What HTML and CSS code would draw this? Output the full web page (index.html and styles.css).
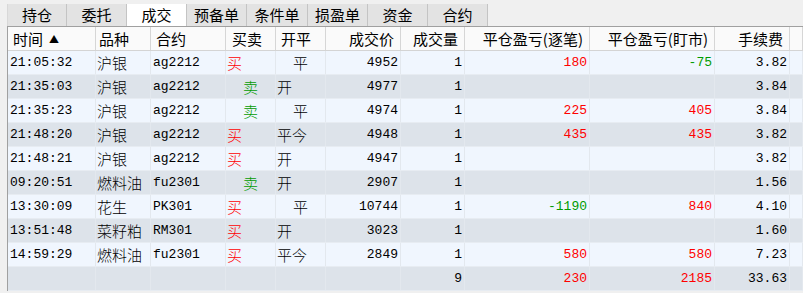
FILE: index.html
```html
<!DOCTYPE html>
<html lang="zh-CN">

<head>
    <meta charset="UTF-8">
    <meta name="viewport" content="width=device-width, initial-scale=1.0">
    <title>成交</title>
    <link rel="stylesheet" href="styles.css">
</head>

<body>

    <div class="tabs">
        <span class="tab">持仓</span>
        <span class="tab">委托</span>
        <span class="tab on">成交</span>
        <span class="tab">预备单</span>
        <span class="tab">条件单</span>
        <span class="tab">损盈单</span>
        <span class="tab">资金</span>
        <span class="tab">合约</span>
    </div>

    <div class="grid">
        <div class="row head">
            <span class="cell">时间<i class="sort">▲</i></span>
            <span class="cell">品种</span>
            <span class="cell">合约</span>
            <span class="cell">买卖</span>
            <span class="cell">开平</span>
            <span class="cell r">成交价</span>
            <span class="cell r">成交量</span>
            <span class="cell r">平仓盈亏(逐笔)</span>
            <span class="cell r">平仓盈亏(盯市)</span>
            <span class="cell r">手续费</span>
            <span class="cell"></span>
        </div>

        <div class="row">
            <span class="cell">21:05:32</span><span class="cell cn">沪银</span><span class="cell">ag2212</span>
            <span class="cell cn red">买</span><span class="cell cn ind">平</span>
            <span class="cell r">4952</span><span class="cell r">1</span>
            <span class="cell r red">180</span><span class="cell r green">-75</span><span class="cell r">3.82</span><span class="cell"></span>
        </div>
        <div class="row">
            <span class="cell">21:35:03</span><span class="cell cn">沪银</span><span class="cell">ag2212</span>
            <span class="cell cn ind green">卖</span><span class="cell cn">开</span>
            <span class="cell r">4977</span><span class="cell r">1</span>
            <span class="cell r"></span><span class="cell r"></span><span class="cell r">3.84</span><span class="cell"></span>
        </div>
        <div class="row">
            <span class="cell">21:35:23</span><span class="cell cn">沪银</span><span class="cell">ag2212</span>
            <span class="cell cn ind green">卖</span><span class="cell cn ind">平</span>
            <span class="cell r">4974</span><span class="cell r">1</span>
            <span class="cell r red">225</span><span class="cell r red">405</span><span class="cell r">3.84</span><span class="cell"></span>
        </div>
        <div class="row">
            <span class="cell">21:48:20</span><span class="cell cn">沪银</span><span class="cell">ag2212</span>
            <span class="cell cn red">买</span><span class="cell cn">平今</span>
            <span class="cell r">4948</span><span class="cell r">1</span>
            <span class="cell r red">435</span><span class="cell r red">435</span><span class="cell r">3.82</span><span class="cell"></span>
        </div>
        <div class="row">
            <span class="cell">21:48:21</span><span class="cell cn">沪银</span><span class="cell">ag2212</span>
            <span class="cell cn red">买</span><span class="cell cn">开</span>
            <span class="cell r">4947</span><span class="cell r">1</span>
            <span class="cell r"></span><span class="cell r"></span><span class="cell r">3.82</span><span class="cell"></span>
        </div>
        <div class="row">
            <span class="cell">09:20:51</span><span class="cell cn">燃料油</span><span class="cell">fu2301</span>
            <span class="cell cn ind green">卖</span><span class="cell cn">开</span>
            <span class="cell r">2907</span><span class="cell r">1</span>
            <span class="cell r"></span><span class="cell r"></span><span class="cell r">1.56</span><span class="cell"></span>
        </div>
        <div class="row">
            <span class="cell">13:30:09</span><span class="cell cn">花生</span><span class="cell">PK301</span>
            <span class="cell cn red">买</span><span class="cell cn ind">平</span>
            <span class="cell r">10744</span><span class="cell r">1</span>
            <span class="cell r green">-1190</span><span class="cell r red">840</span><span class="cell r">4.10</span><span class="cell"></span>
        </div>
        <div class="row">
            <span class="cell">13:51:48</span><span class="cell cn">菜籽粕</span><span class="cell">RM301</span>
            <span class="cell cn red">买</span><span class="cell cn">开</span>
            <span class="cell r">3023</span><span class="cell r">1</span>
            <span class="cell r"></span><span class="cell r"></span><span class="cell r">1.60</span><span class="cell"></span>
        </div>
        <div class="row">
            <span class="cell">14:59:29</span><span class="cell cn">燃料油</span><span class="cell">fu2301</span>
            <span class="cell cn red">买</span><span class="cell cn">平今</span>
            <span class="cell r">2849</span><span class="cell r">1</span>
            <span class="cell r red">580</span><span class="cell r red">580</span><span class="cell r">7.23</span><span class="cell"></span>
        </div>

        <!-- 合计 -->
        <div class="row">
            <span class="cell"></span><span class="cell"></span><span class="cell"></span>
            <span class="cell"></span><span class="cell"></span>
            <span class="cell r"></span><span class="cell r">9</span>
            <span class="cell r red">230</span><span class="cell r red">2185</span><span class="cell r">33.63</span><span class="cell"></span>
        </div>
    </div>

</body>

</html>
```

FILE: styles.css
```css
/* reset START */
* {
    margin: 0;
    padding: 0;
    box-sizing: border-box;
}

body {
    width: 803px;
    height: 293px;
    overflow: hidden;
    background-color: #f0f0f0;
    font-family: "Liberation Mono", "Noto Sans CJK SC", monospace;
    font-size: 13px;
    color: #000000;
}

/* reset END */

/* tabs START */
.tabs {
    display: flex;
    height: 26px;
    padding-top: 4px;
    padding-left: 7px;
}

.tab {
    width: 60px;
    height: 22px;
    line-height: 21px;
    text-align: center;
    background-color: #e3e3e3;
    border-right: 1px solid #c4c4c4;
    font-family: "Noto Sans CJK SC", sans-serif;
    font-size: 15px;
}

.tab:first-child {
    border-left: 1px solid #d8d8d8;
}

.tab:nth-child(5) {
    width: 61px;
}

.tab.on {
    background-color: #ffffff;
}

/* tabs END */

/* grid START */
.grid {
    margin-left: 7px;
    border-left: 1px solid #a0a0a0;
    border-top: 1px solid #a0a0a0;
    background-color: #ffffff;
}

.row {
    display: grid;
    grid-template-columns: 88px 55px 75px 50px 50px 75px 64px 125px 125px 75px 1fr;
    height: 24px;
    background-color: #f0f6fe;
    border-bottom: 1px solid #e7ecf2;
}

.row:nth-child(odd) {
    background-color: #dde3ea;
}

.cell {
    line-height: 24px;
    padding: 0 2px;
    border-right: 1px solid #e3e8ee;
    white-space: nowrap;
    overflow: hidden;
}

.cell.cn {
    padding-left: 1px;
    font-family: "Noto Sans CJK SC", sans-serif;
    font-size: 15px;
    font-weight: 300;
    line-height: 23px;
}

.cell.ind {
    padding-left: 17px;
}

.r {
    text-align: right;
}

.red {
    color: #ff0000;
}

.green {
    color: #009b00;
}

/* grid END */

/* head START */
.row.head {
    background-color: #fafafa;
    border-bottom: 1px solid #d4d4d4;
}

.head .cell {
    padding: 0 6px 0 5px;
    line-height: 23px;
    font-family: "Noto Sans CJK SC", sans-serif;
    font-size: 15px;
    border-right: 1px solid #d6d6d6;
}

.head .cell:nth-child(2) {
    padding-left: 3px;
}

.head .cell:nth-child(4) {
    padding-left: 6px;
}

.sort {
    font-style: normal;
    font-size: 10px;
    margin-left: 6px;
    vertical-align: 2px;
}

/* head END */
```
